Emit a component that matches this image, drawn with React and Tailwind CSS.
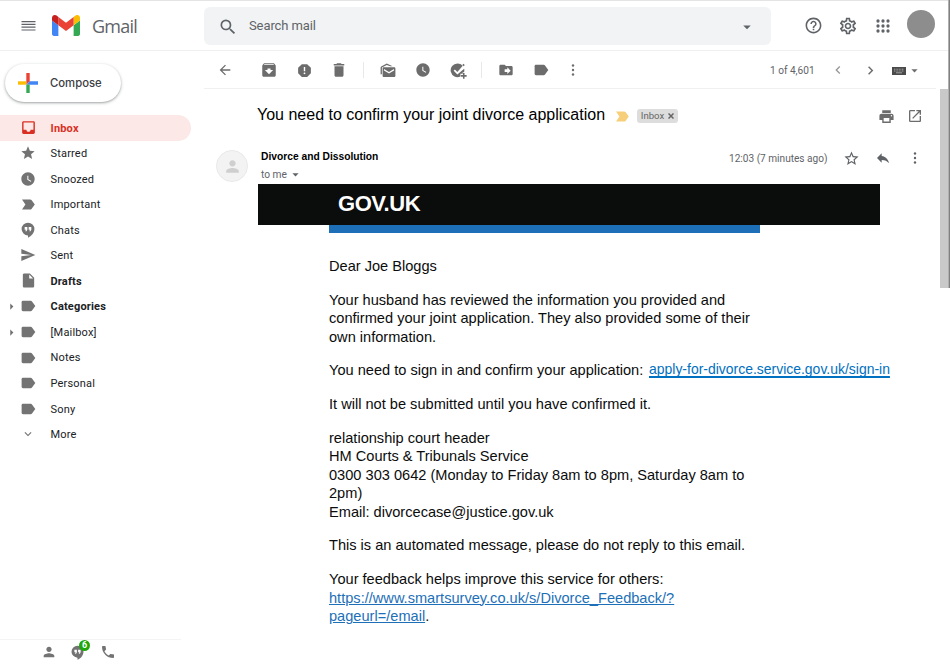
import React from "react";
import {
  MdInbox, MdStar, MdWatchLater, MdSend, MdInsertDriveFile,
  MdExpandMore, MdArrowRight, MdArchive, MdReport, MdDelete,
  MdArrowBack, MdPrint, MdOpenInNew, MdStarBorder, MdReply, MdHelpOutline,
  MdOutlineSettings, MdSearch, MdArrowDropDown, MdPerson, MdPhone, MdChevronLeft,
  MdChevronRight, MdDriveFileMove,
} from "react-icons/md";

function HangoutsIcon({ size = 16, className = "" }) {
  return (
    <svg width={size} height={size} viewBox="0 0 24 24" fill="currentColor" className={className}>
      <path
        fillRule="evenodd"
        d="M12 1A9.6 9.6 0 0 0 12 20.200V23.500C17 21.300 21.600 16.500 21.600 10.600A9.600 9.600 0 0 0 12 1zM7 7.500h4v4.200L9.700 14H7.900L9 11.500H7zM13 7.500h4v4.200L15.700 14H13.900L15 11.500H13z"
      />
    </svg>
  );
}

function AddTaskIcon() {
  return (
    <svg width="17" height="17" viewBox="0 0 24 24" fill="currentColor">
      <path d="M10.500 2a9.700 9.700 0 1 0 4.200 18.500v-4h3.200v-2.200h2A9.700 9.700 0 0 0 20 9.500l-9.600 8L5.200 12.300l1.700-1.700 3.500 3.500L18 5.400A9.700 9.700 0 0 0 10.500 2z" />
      <path d="M18.700 2.400 20.900 4.400 19.400 6 17.500 4.200zM18.300 15.500h2.200v3h3v2.200h-3v3h-2.200v-3h-3v-2.200h3z" />
    </svg>
  );
}

function TagIcon() {
  return (
    <svg width="15" height="12" viewBox="0 0 15 12" fill="currentColor">
      <path d="M2 .8h7.700c.6 0 1 .2 1.300.6L14.300 6 11 10.600c-.3.400-.7.600-1.300.600H2C1.200 11.200.6 10.600.6 9.800V2.200C.6 1.400 1.200.8 2 .8z" />
    </svg>
  );
}

function ImportantIcon() {
  return (
    <svg width="13" height="11" viewBox="0 0 13 11" fill="currentColor">
      <path d="M0 .5h8.200c.6 0 1 .2 1.300.6L12.800 5.500 9.500 9.900c-.3.400-.7.600-1.300.600H0L3.400 5.500z" />
    </svg>
  );
}

function UnreadIcon() {
  return (
    <svg width="16" height="15" viewBox="0 0 16 15" fill="currentColor">
      <path d="M.6 11.200V4.600c0-.5.200-.8.600-1L6.800.6 12.600 3.300H10.200L6.800 1.900 1.900 4.600v6.600z" />
      <path fillRule="evenodd" d="M3.900 4.300h10.200c.8 0 1.300.5 1.300 1.300v7.100c0 .8-.5 1.300-1.300 1.300H3.900c-.8 0-1.300-.5-1.300-1.300V5.600c0-.8.500-1.300 1.300-1.300zM4 6v1.400l5 3 5-3V6L9 9z" />
    </svg>
  );
}

function KeyboardIcon() {
  return (
    <svg width="14" height="8" viewBox="0 0 14 8">
      <rect width="14" height="8" fill="#4a4a4a" />
      <path stroke="#a2a2a2" strokeWidth="1" strokeDasharray="1 .6" d="M2 2.200h10M2 4h10" />
      <path stroke="#a2a2a2" strokeWidth="1" d="M4 5.800h6" />
    </svg>
  );
}

function AppsIcon() {
  return (
    <svg width="14" height="14" viewBox="0 0 14 14" fill="currentColor">
      {[2, 7, 12].map((y) => [2, 7, 12].map((x) => <circle key={x + "-" + y} cx={x} cy={y} r="1.650" />))}
    </svg>
  );
}

function DotsIcon() {
  return (
    <svg width="4" height="12" viewBox="0 0 4 12" fill="currentColor">
      <circle cx="2" cy="1.500" r="1.200" />
      <circle cx="2" cy="6" r="1.200" />
      <circle cx="2" cy="10.500" r="1.200" />
    </svg>
  );
}

function MenuIcon() {
  return (
    <svg width="15" height="12" viewBox="0 0 15 12" stroke="currentColor" strokeWidth="1.200">
      <path d="M.5 1.600h14M.5 4.400h14M.5 7.200h14M.5 10h14" />
    </svg>
  );
}

function GmailLogo() {
  return (
    <svg width="28" height="21" viewBox="52 42 88 66">
      <path fill="#4285f4" d="M58 108h14V74L52 59v43c0 3.320 2.690 6 6 6" />
      <path fill="#34a853" d="M120 108h14c3.320 0 6-2.690 6-6V59l-20 15" />
      <path fill="#fbbc04" d="M120 48v26l20-15v-8c0-7.420-8.470-11.650-14.400-7.200" />
      <path fill="#ea4335" d="M72 74V48l24 18 24-18v26L96 92" />
      <path fill="#c5221f" d="M52 51v8l20 15V48l-5.600-4.200c-5.940-4.450-14.400-.22-14.400 7.200" />
    </svg>
  );
}

function ComposePlus() {
  return (
    <svg width="20" height="20" viewBox="0 0 20 20">
      <path fill="#ea4335" d="M8.300 0h3.400v8.300L8.300 11.700z" />
      <path fill="#4285f4" d="M11.700 8.300H20v3.400H8.300z" />
      <path fill="#34a853" d="M8.300 11.700h3.400V20H8.300z" />
      <path fill="#fbbc04" d="M0 8.300h8.300v3.400H0z" />
    </svg>
  );
}

const folders = [
  { name: "Inbox", icon: MdInbox, size: 17, active: true },
  { name: "Starred", icon: MdStar, size: 16 },
  { name: "Snoozed", icon: MdWatchLater, size: 16 },
  { name: "Important", icon: ImportantIcon },
  { name: "Chats", icon: HangoutsIcon, size: 16 },
  { name: "Sent", icon: MdSend, size: 16 },
  { name: "Drafts", icon: MdInsertDriveFile, size: 17, bold: true },
  { name: "Categories", icon: TagIcon, bold: true, arrow: true },
  { name: "[Mailbox]", icon: TagIcon, arrow: true },
  { name: "Notes", icon: TagIcon },
  { name: "Personal", icon: TagIcon },
  { name: "Sony", icon: TagIcon },
  { name: "More", icon: MdExpandMore, size: 14 },
];

function Slot({ width, children }) {
  return (
    <span className="flex shrink-0 items-center justify-center" style={{ width }}>
      {children}
    </span>
  );
}

function Header() {
  return (
    <header className="flex h-[51px] shrink-0 items-center border-t border-b border-t-[#e4e4e4] border-b-[#eeeff0] text-[#5f6368]">
      <div className="flex w-[204px] items-center pl-[20.500px]">
        <MenuIcon />
        <span className="ml-[16.500px] flex"><GmailLogo /></span>
        <span className="ml-[12px] font-['Open_Sans',sans-serif] text-[18px] leading-6 tracking-[-0.75px]">Gmail</span>
      </div>
      <div className="flex h-[38px] w-[567px] items-center rounded-[6px] bg-[#f1f3f4] pl-[14px] pr-[15px]">
        <MdSearch size={20} className="mt-[2px]" />
        <span className="ml-[11px] flex-1 pt-px font-[Roboto,sans-serif] text-[13px] tracking-[-0.1px]">Search mail</span>
        <MdArrowDropDown size={18} className="mt-[2px]" />
      </div>
      <div className="ml-[24px] flex items-center">
        <Slot width={36}><MdHelpOutline size={19} /></Slot>
        <Slot width={34}><MdOutlineSettings size={20} /></Slot>
        <Slot width={36}><AppsIcon /></Slot>
        <span className="-mt-[3px] ml-[6px] size-7 rounded-full bg-[#8d8d8d]" />
      </div>
    </header>
  );
}

function Sidebar() {
  return (
    <aside className="flex w-[204px] shrink-0 flex-col font-[Roboto,sans-serif] text-[#202124]">
      <button className="mt-[13px] ml-[5px] flex h-[38px] w-[116px] items-center rounded-full bg-white pl-[13px] shadow-[0_1px_2px_rgba(60,64,67,0.35),0_1px_3px_1px_rgba(60,64,67,0.12)]">
        <ComposePlus />
        <span className="mt-px ml-[12px] font-[Inter,sans-serif] text-[11.300px] font-medium text-[#3c4043]">Compose</span>
      </button>
      <nav className="mt-[13px] flex flex-col">
        {folders.map(({ name, icon: Icon, size, active, bold, arrow }) => (
          <div
            key={name}
            className={
              "flex h-[25.54px] w-[191px] items-center text-[11px] tracking-[0.18px] " +
              (active ? "rounded-r-full bg-[#fce8e6] font-bold text-[#d93025]" : bold ? "font-bold" : "")
            }
          >
            <span className="flex w-[19px] justify-end text-[#707070]">{arrow && <MdArrowRight size={15} />}</span>
            <span className={"flex w-[18px] justify-center " + (active ? "text-[#d93025]" : "text-[#737373]")}>
              <Icon size={size} />
            </span>
            <span className="ml-[13.500px] pt-[2.400px]">{name}</span>
          </div>
        ))}
      </nav>
      <div className="mt-auto flex h-[25px] w-[181px] items-center border-t border-[#f4f4f4] pl-[41px] text-[#737373]">
        <MdPerson size={16} />
        <span className="relative ml-[13px] flex">
          <HangoutsIcon size={15} />
          <span className="absolute -top-[5px] left-[9px] flex size-[11px] items-center justify-center rounded-full bg-[#1fa60d] text-[9px] leading-none font-bold text-white">6</span>
        </span>
        <MdPhone size={16} className="ml-[15px]" />
      </div>
    </aside>
  );
}

function Toolbar() {
  return (
    <div className="flex h-[38px] w-[732px] shrink-0 items-center border-b border-[#f0f0f0] pt-px text-[#6c6c6c]">
      <Slot width={41}><MdArrowBack size={16} /></Slot>
      <span className="w-[6px]" />
      <Slot width={36}><MdArchive size={18} /></Slot>
      <Slot width={34}><MdReport size={17} /></Slot>
      <Slot width={36}><MdDelete size={18} /></Slot>
      <span className="ml-[6px] h-4 w-px bg-[#e8e8e8]" />
      <span className="w-[6px]" />
      <Slot width={35}><UnreadIcon /></Slot>
      <Slot width={35}><MdWatchLater size={16} /></Slot>
      <Slot width={36}><AddTaskIcon /></Slot>
      <span className="ml-[5px] h-4 w-px bg-[#e8e8e8]" />
      <span className="w-[6px]" />
      <Slot width={36}><MdDriveFileMove size={16} /></Slot>
      <Slot width={35}><TagIcon /></Slot>
      <Slot width={28}><DotsIcon /></Slot>
      <span className="ml-[183px] w-[45px] pt-px font-[Roboto,sans-serif] text-[10.100px] whitespace-nowrap text-[#5f6368]">1 of 4,601</span>
      <span className="ml-[7px] flex items-center">
        <Slot width={32}><MdChevronLeft size={16} className="opacity-70" /></Slot>
        <Slot width={32}><MdChevronRight size={17} /></Slot>
        <span className="mt-[2px] ml-[6px] flex"><KeyboardIcon /></span>
        <MdArrowDropDown size={15} className="ml-px" />
      </span>
    </div>
  );
}

function MessageHead() {
  return (
    <div className="font-[Roboto,sans-serif] text-[#5f6368]">
      <div className="flex h-[51px] items-center pl-[53px]">
        <h1 className="w-[349px] font-['Liberation_Sans',Arial,sans-serif] text-[16px] whitespace-nowrap text-black">
          You need to confirm your joint divorce application
        </h1>
        <span className="mt-[3px] ml-[10px] flex text-[#f7cf7b]"><ImportantIcon /></span>
        <span className="mt-[3px] ml-[8px] flex h-[14px] w-[41px] items-center justify-center gap-[4px] rounded-[3px] bg-[#dddddd] text-[9.600px] text-[#666666]">
          Inbox
          <svg width="6" height="6" viewBox="0 0 6 6" stroke="currentColor" strokeWidth="1.500"><path d="M.5.5l5 5M5.500.5l-5 5" /></svg>
        </span>
        <MdPrint size={17} className="mt-[3px] ml-[200px] text-[#6c6c6c]" />
        <MdOpenInNew size={16} className="mt-[3px] ml-[12px] text-[#6c6c6c]" />
      </div>
      <div className="flex h-[44px]">
        <span className="mt-[10px] ml-[12px] flex size-8 items-center justify-center rounded-full border border-[#e9e9e9] bg-[#f3f3f3] text-[#cfcfcf]">
          <MdPerson size={19} />
        </span>
        <div className="ml-[13px] w-[468px] pt-[10px]">
          <div className="font-['Liberation_Sans',Arial,sans-serif] text-[10.250px] leading-[14px] font-bold text-black">Divorce and Dissolution</div>
          <div className="mt-[3px] flex items-center text-[10.200px] leading-[14px]">
            to me <MdArrowDropDown size={15} className="ml-px" />
          </div>
        </div>
        <div className="flex h-[36px] items-center text-[10.100px] whitespace-nowrap">
          <span className="w-[99px] pt-px">12:03 (7 minutes ago)</span>
          <MdStarBorder size={17} className="ml-[15px]" />
          <MdReply size={16} className="ml-[15px]" />
          <span className="ml-[22px] flex"><DotsIcon /></span>
        </div>
      </div>
    </div>
  );
}

function Message() {
  return (
    <div>
      <div className="ml-[54px] flex h-[41px] w-[622px] items-center bg-[#0b0c0c] pl-[80px] font-['Liberation_Sans',Arial,sans-serif] text-[22px] font-bold tracking-[-0.45px] text-white">
        <span className="-mt-[3px]">GOV.UK</span>
      </div>
      <div className="ml-[125px] h-2 w-[431px] bg-[#1d70b8]" />
      <div className="mt-[24px] ml-[125px] flex w-[440px] flex-col gap-[15.400px] font-['Liberation_Sans',Arial,sans-serif] text-[14.600px] leading-[18.400px] whitespace-nowrap text-[#0b0c0c]">
        <p>Dear Joe Bloggs</p>
        <p>
          Your husband has reviewed the information you provided and<br />
          confirmed your joint application. They also provided some of their<br />
          own information.
        </p>
        <p className="flex">
          <span className="w-[320px] shrink-0">You need to sign in and confirm your application:</span>
          <a className="-mt-px text-[13.960px] text-[#0070c0] underline decoration-[1.500px] underline-offset-2">apply-for-divorce.service.gov.uk/sign-in</a>
        </p>
        <p>It will not be submitted until you have confirmed it.</p>
        <p>
          relationship court header<br />
          HM Courts &amp; Tribunals Service<br />
          0300 303 0642 (Monday to Friday 8am to 8pm, Saturday 8am to<br />
          2pm)<br />
          Email: divorcecase@justice.gov.uk
        </p>
        <p>This is an automated message, please do not reply to this email.</p>
        <p>
          Your feedback helps improve this service for others:<br />
          <a className="text-[#1d70b8] underline">https://www.smartsurvey.co.uk/s/Divorce_Feedback/?</a><br />
          <a className="text-[#1d70b8] underline">pageurl=/email</a>.
        </p>
      </div>
    </div>
  );
}

export default function App() {
  return (
    <div className="relative flex h-[664px] w-[950px] flex-col overflow-hidden bg-white">
      <Header />
      <div className="flex min-h-0 flex-1">
        <Sidebar />
        <main className="w-[746px]">
          <Toolbar />
          <MessageHead />
          <Message />
        </main>
      </div>
      <span className="absolute top-[89px] right-[2px] h-[199px] w-[8px] bg-[#c9c9c9]" />
      <span className="absolute top-0 right-0 h-[288px] w-[2px] border-l border-[#b0b0b0] bg-[#808080]" />
    </div>
  );
}
